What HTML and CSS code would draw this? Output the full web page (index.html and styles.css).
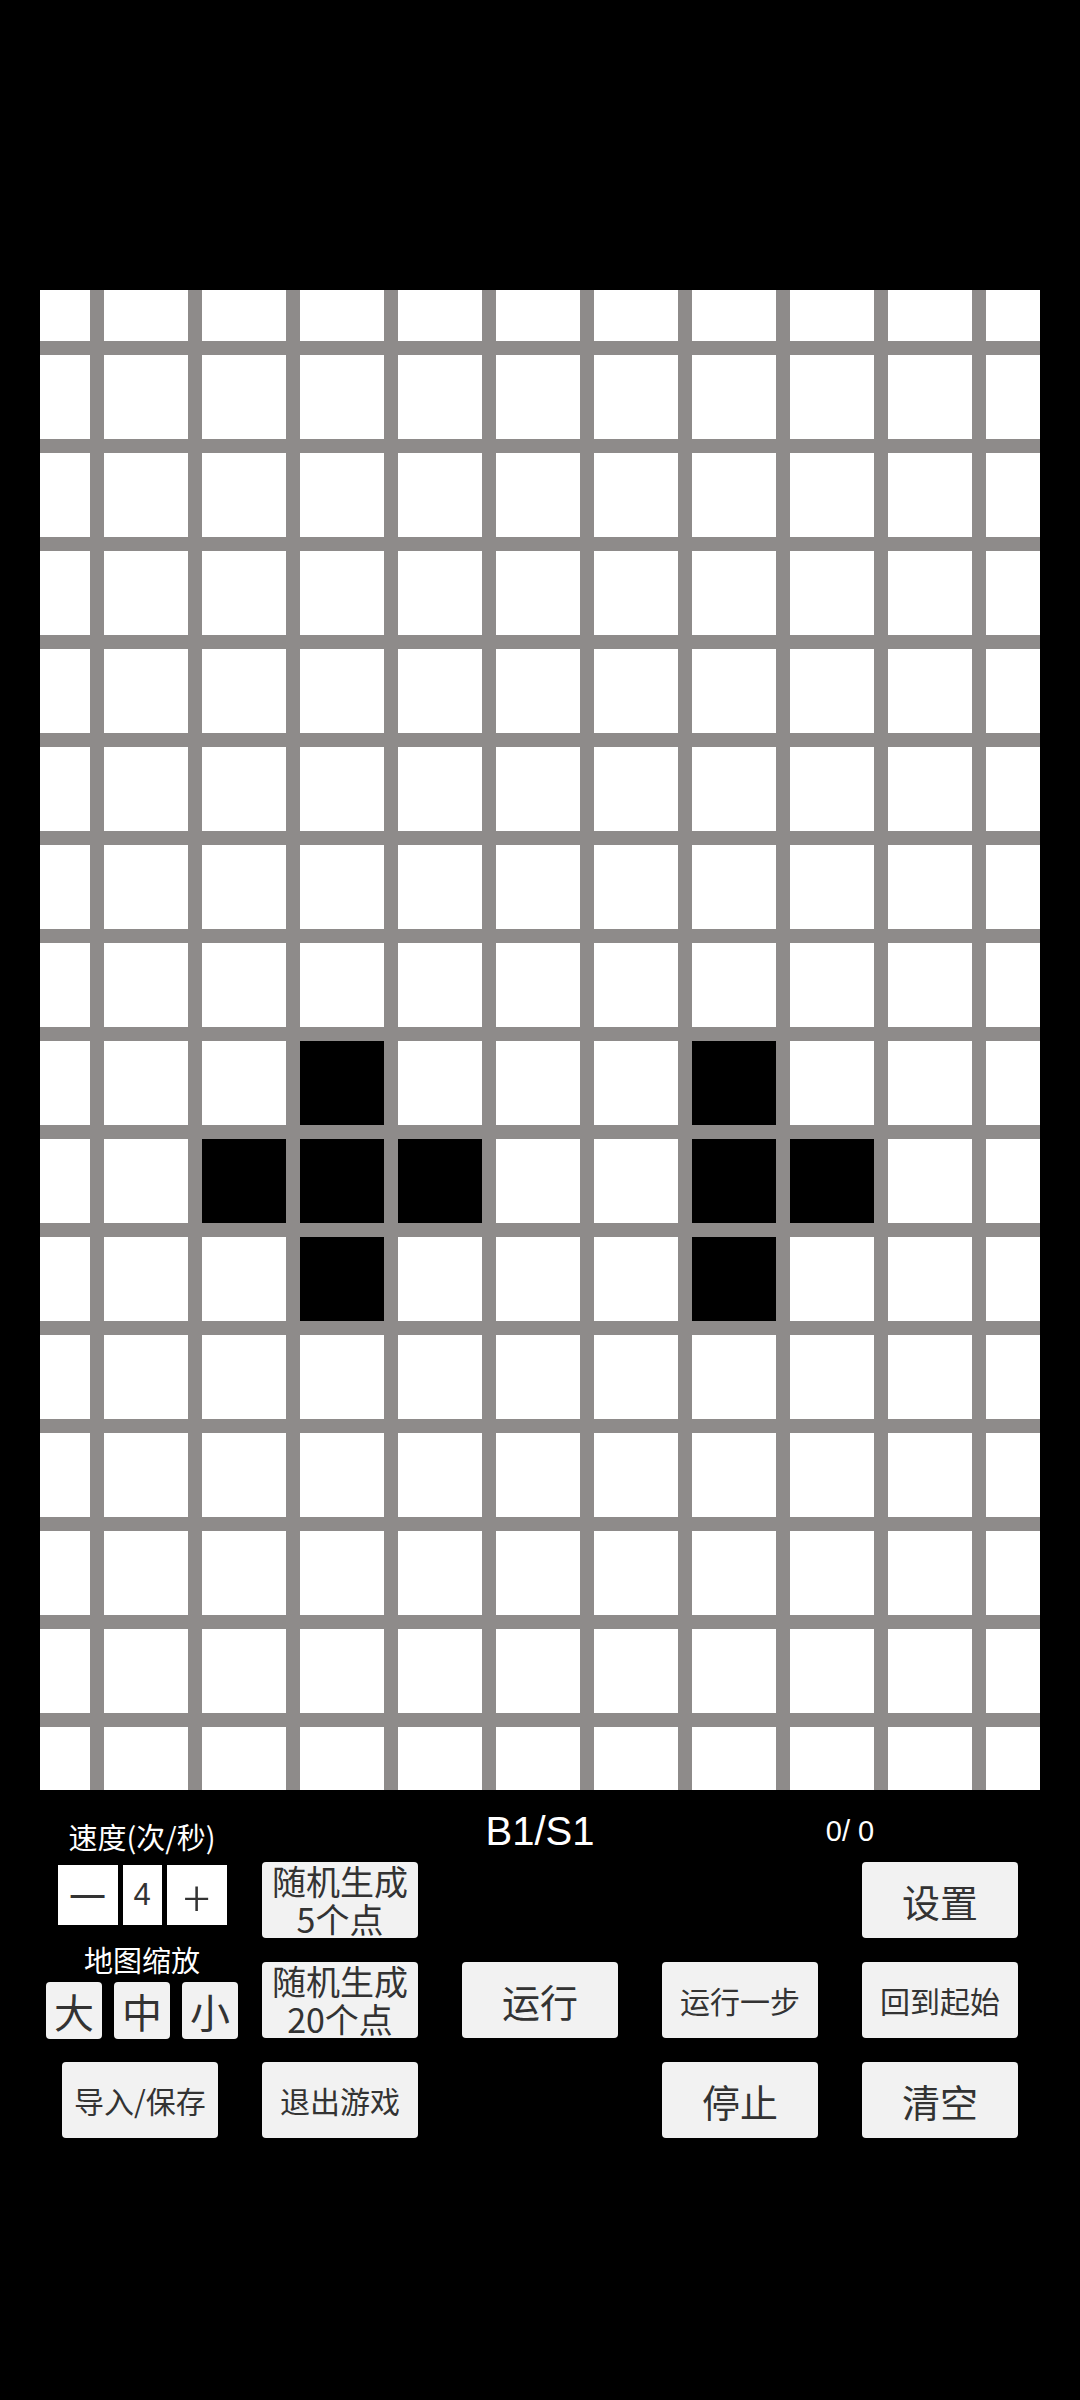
FILE: index.html
```html
<!DOCTYPE html>
<html lang="zh-CN">
<head>
<meta charset="utf-8">
<title>Life</title>
<link rel="stylesheet" href="styles.css">
</head>
<body>
<main class="screen">
  <section class="board">
    <span></span><span></span><span></span><span></span><span></span><span></span><span></span><span></span><span></span><span></span><span></span>
    <span></span><span></span><span></span><span></span><span></span><span></span><span></span><span></span><span></span><span></span><span></span>
    <span></span><span></span><span></span><span></span><span></span><span></span><span></span><span></span><span></span><span></span><span></span>
    <span></span><span></span><span></span><span></span><span></span><span></span><span></span><span></span><span></span><span></span><span></span>
    <span></span><span></span><span></span><span></span><span></span><span></span><span></span><span></span><span></span><span></span><span></span>
    <span></span><span></span><span></span><span></span><span></span><span></span><span></span><span></span><span></span><span></span><span></span>
    <span></span><span></span><span></span><span></span><span></span><span></span><span></span><span></span><span></span><span></span><span></span>
    <span></span><span></span><span></span><span></span><span></span><span></span><span></span><span></span><span></span><span></span><span></span>
    <span></span><span></span><span></span><span class="on"></span><span></span><span></span><span></span><span class="on"></span><span></span><span></span><span></span>
    <span></span><span></span><span class="on"></span><span class="on"></span><span class="on"></span><span></span><span></span><span class="on"></span><span class="on"></span><span></span><span></span>
    <span></span><span></span><span></span><span class="on"></span><span></span><span></span><span></span><span class="on"></span><span></span><span></span><span></span>
    <span></span><span></span><span></span><span></span><span></span><span></span><span></span><span></span><span></span><span></span><span></span>
    <span></span><span></span><span></span><span></span><span></span><span></span><span></span><span></span><span></span><span></span><span></span>
    <span></span><span></span><span></span><span></span><span></span><span></span><span></span><span></span><span></span><span></span><span></span>
    <span></span><span></span><span></span><span></span><span></span><span></span><span></span><span></span><span></span><span></span><span></span>
    <span></span><span></span><span></span><span></span><span></span><span></span><span></span><span></span><span></span><span></span><span></span>
  </section>

  <section class="controls">
    <div class="panel">
      <div class="label speed-label">速度(次/秒)</div>
      <div class="speed">
        <div class="box minus">一</div>
        <div class="box value">4</div>
        <div class="box plus">+</div>
      </div>
      <div class="label zoom-label">地图缩放</div>
      <div class="zoom">
        <button class="btn zbtn">大</button>
        <button class="btn zbtn">中</button>
        <button class="btn zbtn">小</button>
      </div>
    </div>

    <div class="rule">B1/S1</div>
    <div class="count">0/ 0</div>

    <button class="btn two r2 c2"><span class="ln">随机生成</span><span class="ln">5个点</span></button>
    <button class="btn big r2 c5">设置</button>

    <button class="btn two r3 c2"><span class="ln">随机生成</span><span class="ln">20个点</span></button>
    <button class="btn big r3 c3">运行</button>
    <button class="btn mid r3 c4">运行一步</button>
    <button class="btn mid r3 c5">回到起始</button>

    <button class="btn mid r4 c1">导入/保存</button>
    <button class="btn mid r4 c2">退出游戏</button>
    <button class="btn big r4 c4">停止</button>
    <button class="btn big r4 c5">清空</button>
  </section>
</main>
</body>
</html>
```

FILE: styles.css
```css
html, body {
  margin: 0;
  padding: 0;
  background: #000;
}

.screen {
  width: 1080px;
  height: 2400px;
  background: #000;
  overflow: hidden;
  font-family: "Noto Sans CJK SC", "Noto Sans", sans-serif;
}

.board {
  margin: 290px 0 0 40px;
  width: 1000px;
  height: 1500px;
  background: #8e8b8a;
  display: grid;
  grid-template-columns: 50px repeat(9, 84px) 54px;
  grid-template-rows: 51px repeat(14, 84px) 63px;
  gap: 14px;
}

.board span {
  background: #fff;
}

.board span.on {
  background: #000;
}

.controls {
  margin-left: 62px;
  display: grid;
  grid-template-columns: repeat(5, 156px);
  grid-template-rows: 48px 76px 76px 76px;
  column-gap: 44px;
  row-gap: 24px;
}

.panel {
  grid-column: 1;
  grid-row: 1 / 4;
  margin: 0 -20px 0 -16px;
  display: flex;
  flex-direction: column;
  align-items: center;
}

.label {
  color: #fff;
  font-size: 29px;
  line-height: 36px;
  white-space: nowrap;
}

.speed-label {
  margin-top: 28px;
}

.speed {
  margin-top: 11px;
  display: flex;
  gap: 5px;
}

.box {
  height: 60px;
  background: #fff;
  color: #333;
  display: flex;
  align-items: center;
  justify-content: center;
}

.box.minus {
  width: 60px;
  font-size: 37px;
  line-height: 1;
}

.box.value {
  width: 39px;
  font-family: "Liberation Sans", sans-serif;
  font-size: 31px;
}

.box.plus {
  width: 60px;
  font-size: 50px;
  font-weight: 300;
  line-height: 1;
}

.zoom-label {
  margin-top: 16px;
}

.zoom {
  margin-top: 5px;
  width: 192px;
  display: flex;
  justify-content: space-between;
}

.btn {
  border: none;
  padding: 0;
  margin: 0;
  background: #f2f2f2;
  border-radius: 4px;
  color: #333;
  font-family: "Noto Sans CJK SC", "Noto Sans", sans-serif;
  display: flex;
  align-items: center;
  justify-content: center;
  text-align: center;
}

.zbtn {
  width: 56px;
  height: 57px;
  font-size: 40px;
  line-height: 1;
}

.big {
  font-size: 38px;
}

.mid {
  font-size: 30px;
}

.two {
  flex-direction: column;
  font-size: 34px;
}

.two .ln {
  display: block;
  line-height: 38px;
}

.rule {
  grid-column: 3;
  grid-row: 1;
  margin-top: 21px;
  color: #fff;
  font-family: "Liberation Sans", sans-serif;
  font-size: 40px;
  line-height: 40px;
  text-align: center;
}

.count {
  grid-column: 4 / 6;
  grid-row: 1;
  margin-top: 27px;
  padding-left: 20px;
  color: #fff;
  font-family: "Liberation Sans", sans-serif;
  font-size: 29px;
  line-height: 29px;
  text-align: center;
}

.r2 { grid-row: 2; }
.r3 { grid-row: 3; }
.r4 { grid-row: 4; }
.c1 { grid-column: 1; }
.c2 { grid-column: 2; }
.c3 { grid-column: 3; }
.c4 { grid-column: 4; }
.c5 { grid-column: 5; }
```
